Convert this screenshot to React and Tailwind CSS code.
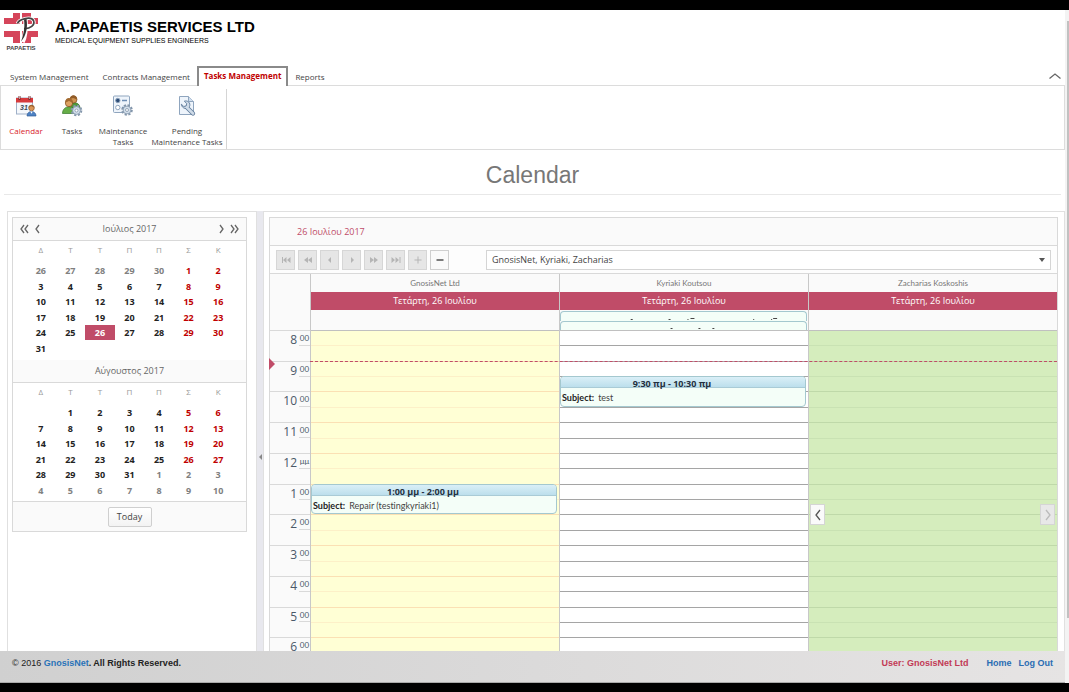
import clsx from 'clsx';

const tabs = ['System Management', 'Contracts Management', 'Tasks Management', 'Reports'];

const weekdays = ['Δ', 'Τ', 'Τ', 'Π', 'Π', 'Σ', 'Κ'];

const july = [
  [26, 27, 28, 29, 30, 1, 2],
  [3, 4, 5, 6, 7, 8, 9],
  [10, 11, 12, 13, 14, 15, 16],
  [17, 18, 19, 20, 21, 22, 23],
  [24, 25, 26, 27, 28, 29, 30],
  [31, null, null, null, null, null, null],
];

const august = [
  [null, 1, 2, 3, 4, 5, 6],
  [7, 8, 9, 10, 11, 12, 13],
  [14, 15, 16, 17, 18, 19, 20],
  [21, 22, 23, 24, 25, 26, 27],
  [28, 29, 30, 31, 1, 2, 3],
  [4, 5, 6, 7, 8, 9, 10],
];

const hours = [
  [8, '00'], [9, '00'], [10, '00'], [11, '00'], [12, 'μμ'], [1, '00'],
  [2, '00'], [3, '00'], [4, '00'], [5, '00'], [6, '00'],
];

const columns = [
  {
    name: 'GnosisNet Ltd',
    cell: 'bg-[#ffffd5]',
    hourLine: 'border-[#fbe0b4]',
    halfLine: 'border-[#fdf0c8]',
    event: { start: 13, end: 14, time: '1:00 μμ - 2:00 μμ', subject: 'Repair (testingkyriaki1)' },
  },
  {
    name: 'Kyriaki Koutsou',
    cell: 'bg-white',
    hourLine: 'border-[#a5a5a5]',
    halfLine: 'border-[#a5a5a5]',
    allDay: true,
    event: { start: 9.5, end: 10.5, time: '9:30 πμ - 10:30 πμ', subject: 'test' },
  },
  {
    name: 'Zacharias Koskoshis',
    cell: 'bg-[#d5edbd]',
    hourLine: 'border-[#bfd9a9]',
    halfLine: 'border-[#c9e2b3]',
  },
];

const position = (hour) => `${((hour - 8) / hours.length) * 100}%`;

function Logo() {
  return (
    <div className="w-9 shrink-0">
      <svg viewBox="0 0 36 31" className="block h-[31px] w-9">
        <path d="M10 0h7v11H1V5h9zM19 0h9v5h7v6H19zM1 18h16v12h-7v-6H1zM19 18h16v6h-7v6h-9z" fill="#d5455a" />
        <path d="M22.500 6C23 15 23 22 19.500 29" fill="none" stroke="#fff" strokeWidth="4.500" />
        <path d="M14.500 10.500C16 6 28 3 30.500 7.500C32.500 12 27 16 21 15.500" fill="none" stroke="#fff" strokeWidth="3.500" />
        <path d="M14.500 10.500C16 6 28 3 30.500 7.500C32.500 12 27 16 21 15.500" fill="none" stroke="#444" strokeWidth="1.700" />
        <path d="M21 6.500C22 14 21 20 18 28.500C23 23 25 15 23.500 6z" fill="#333" />
      </svg>
      <div className="text-center font-['Liberation_Sans'] text-[6px] leading-[8px] font-bold text-[#444]">PAPAETIS</div>
    </div>
  );
}

function GearShape({ x, y }) {
  return (
    <g transform={`translate(${x} ${y})`}>
      <circle r="4.600" fill="none" stroke="#8396ab" strokeWidth="2.400" strokeDasharray="2.100 1.510" />
      <circle r="3.900" fill="#d3dfeb" stroke="#8396ab" strokeWidth=".8" />
      <circle r="1.500" fill="#fff" stroke="#8396ab" strokeWidth=".8" />
    </g>
  );
}

function CalendarIcon() {
  return (
    <svg viewBox="0 0 22 22" className="h-[22px] w-[22px]">
      <rect x="1.500" y="3" width="16" height="16" fill="#f5f8fc" stroke="#9fb0c8" />
      <path d="M1 3h17v4.500H1z" fill="#d63a3c" />
      <path d="M4.500 1v4M14.500 1v4" stroke="#7a2a2c" strokeWidth="2" />
      <path d="M4.500 1v3M14.500 1v3" stroke="#e8d5d5" strokeWidth=".7" />
      <text x="5" y="15" fontSize="7" fontStyle="italic" fontWeight="bold" fill="#3c4654" fontFamily="Liberation Sans">31</text>
      <circle cx="16.500" cy="13" r="2.800" fill="#d99557" stroke="#8f562a" strokeWidth=".7" />
      <path d="M13.500 12.500c.5-3.500 5.500-3.500 6 0-2-.4-3-1.500-3.500-1.500s-1 1.200-2.500 1.500z" fill="#99602e" />
      <path d="M12 21c0-6 9-6 9 0z" fill="#4e82c4" stroke="#2f5c98" strokeWidth=".7" />
      <path d="M15.200 16.500l1.300 2.300 1.300-2.300z" fill="#fff" />
    </svg>
  );
}

function TasksIcon() {
  return (
    <svg viewBox="0 0 22 22" className="h-[22px] w-[22px]">
      <path d="M8 13c0-7 11-7 11 0z" fill="#4f9a3b" stroke="#2f6e23" strokeWidth=".7" />
      <circle cx="12.500" cy="4.500" r="3.500" fill="#cf9352" stroke="#7c4a1d" strokeWidth=".7" />
      <path d="M9 4c0-5 7-5 7 .5-2-.5-3-1.500-4-1.500s-1.500 1-3 1z" fill="#925c28" />
      <path d="M1.500 18.500c0-9 13-9 13 0z" fill="#66ad47" stroke="#35782a" strokeWidth=".7" />
      <circle cx="8" cy="8" r="3.700" fill="#dda263" stroke="#7c4a1d" strokeWidth=".7" />
      <path d="M4.200 7.500c0-6 7.600-6 7.600.5-2-.5-2.800-2-3.800-2s-2 1.500-3.800 1.500z" fill="#a36a30" />
      <GearShape x={15.500} y={15.500} />
    </svg>
  );
}

function MaintenanceIcon() {
  return (
    <svg viewBox="0 0 22 22" className="h-[22px] w-[22px]">
      <rect x="1.500" y="1" width="16" height="16.500" rx="1" fill="#eef4fb" stroke="#8fa5be" />
      <circle cx="5.800" cy="5.500" r="2.200" fill="#2d4d77" stroke="#8fa5be" />
      <circle cx="5.800" cy="12.500" r="2.200" fill="#fff" stroke="#8fa5be" />
      <path d="M10 5.500h5M10 12.500h3" stroke="#6c8db4" strokeWidth="1.500" />
      <GearShape x={15} y={15} />
    </svg>
  );
}

function PendingIcon() {
  return (
    <svg viewBox="0 0 22 22" className="h-[22px] w-[22px]">
      <path d="M3.500 1.500h9l5 5v13h-14z" fill="#eef4fb" stroke="#8fa5be" />
      <path d="M12.500 1.500v5h5" fill="#d0deed" stroke="#8fa5be" />
      <path d="M11 12.500l6 6" stroke="#5f7a99" strokeWidth="4.200" strokeLinecap="round" />
      <path d="M5.300 9.200l2.500 2.300 2.400-.6.500-2.400-2.400-2.300c3.500-1.300 6.700 2 5.200 5.300-1.600 3.200-7.600 2.700-8.200-2.300z" fill="#cfdbe8" stroke="#5f7a99" strokeWidth=".9" />
      <path d="M11 12.500l6 6" stroke="#cfdbe8" strokeWidth="2.600" strokeLinecap="round" />
    </svg>
  );
}

function Header() {
  return (
    <header className="font-['Open_Sans'] text-[8px]">
      <div className="flex h-14 gap-4 pt-[3px] pl-[3px]">
        <Logo />
        <div className="pt-[5px] font-['Liberation_Sans'] text-black">
          <div className="text-[15px] leading-[18px] font-bold">A.PAPAETIS SERVICES LTD</div>
          <div className="text-[7px] leading-[9px]">MEDICAL EQUIPMENT SUPPLIES ENGINEERS</div>
        </div>
      </div>

      <nav className="flex h-[19px] items-stretch pr-1 pl-[3px]">
        {tabs.map(tab => {
          const active = tab === 'Tasks Management';
          return (
            <a
              key={tab}
              href="#"
              className={clsx(
                'whitespace-nowrap',
                active ? 'z-10 -mb-px border-2 border-b-0 border-[#8a8a8a] bg-white px-[5px] leading-[16px] font-bold text-[#c00000]' : 'px-[7px] leading-[21px]'
              )}
            >
              {tab}
            </a>
          );
        })}
        <button aria-label="Collapse ribbon" className="ml-auto">
          <svg viewBox="0 0 12 6" className="h-[6px] w-3" fill="none" stroke="#666" strokeWidth="1.300"><path d="M.5 5.500L6 1l5.500 4.500" /></svg>
        </button>
      </nav>

      <div className="flex h-[65px] border border-[#dcdcdc] pl-[2px]">
        <div className="mt-[3px] flex border-r border-[#d5d5d5] pr-[3px] text-center leading-[11px]">
          <RibbonItem icon={<CalendarIcon />} className="w-[46px] text-[#d8232a]">Calendar</RibbonItem>
          <RibbonItem icon={<TasksIcon />} className="w-[46px]">Tasks</RibbonItem>
          <RibbonItem icon={<MaintenanceIcon />} className="w-14">Maintenance<br />Tasks</RibbonItem>
          <RibbonItem icon={<PendingIcon />} className="w-[72px]">Pending<br />Maintenance Tasks</RibbonItem>
        </div>
      </div>
    </header>
  );
}

function RibbonItem({ icon, className, children }) {
  return (
    <button className={clsx('flex flex-col items-center gap-2 pt-[6px] whitespace-nowrap', className)}>
      {icon}
      <span>{children}</span>
    </button>
  );
}

function Month({ weeks, current }) {
  return (
    <div className="px-[13px]">
      <table className="w-full table-fixed text-center">
        <thead>
          <tr className="h-[22px] font-['Open_Sans'] text-[8px] text-[#999]">
            {weekdays.map((d, i) => <th key={i} className="p-0 pb-1 font-normal">{d}</th>)}
          </tr>
        </thead>
        <tbody className="font-['Open_Sans'] leading-[15px] font-bold">
          {weeks.map((week, w) => (
            <tr key={w} className="h-[15px] even:h-[16px]">
              {week.map((day, i) => {
                const outside = (w === 0 && day > 7) || (w > 3 && day < 15);
                return (
                  <td
                    key={i}
                    className={clsx(
                      'p-0',
                      day === current && w === 4 ? 'bg-[#c04c68] text-white'
                        : outside ? 'text-[#808080]'
                        : i > 4 ? 'text-[#c00000]' : 'text-[#222]'
                    )}
                  >
                    {day}
                  </td>
                );
              })}
            </tr>
          ))}
        </tbody>
      </table>
    </div>
  );
}

function Chevrons({ d }) {
  return (
    <svg viewBox="0 0 10 10" className="h-[10px] w-[10px]" fill="none" stroke="#666" strokeWidth="1.300"><path d={d} /></svg>
  );
}

function DatePicker() {
  return (
    <div className="border border-[#d9d9d9]">
      <div className="flex h-[23px] items-center border-b border-[#d9d9d9] bg-[#fafafa] px-[6px] text-[#666]">
        <button aria-label="Previous year"><Chevrons d="M5 1L2 5l3 4M9 1L6 5l3 4" /></button>
        <button aria-label="Previous month" className="ml-1"><Chevrons d="M6 1L3 5l3 4" /></button>
        <span className="flex-1 text-center font-['Open_Sans']">Ιούλιος 2017</span>
        <button aria-label="Next month" className="mr-1"><Chevrons d="M4 1l3 4-3 4" /></button>
        <button aria-label="Next year"><Chevrons d="M1 1l3 4-3 4M5 1l3 4-3 4" /></button>
      </div>
      <Month weeks={july} current={26} />
      <div className="mt-[4px] h-[23px] border-b border-[#d9d9d9] bg-[#fafafa] text-center font-['Open_Sans'] leading-[22px] text-[#666]">Αύγουστος 2017</div>
      <Month weeks={august} />
      <div className="mt-[3px] flex h-[30px] items-center justify-center border-t border-[#d9d9d9] bg-[#fafafa]">
        <button className="h-5 w-11 rounded-xs border border-[#cfcfcf] bg-linear-to-b from-white to-[#f3f3f3] font-['Open_Sans']">Today</button>
      </div>
    </div>
  );
}

const toolbar = [
  ['First', 'M1 2h1v6H1zM5.500 2v6L2 5zM9.500 2v6L6 5z'],
  ['Page back', 'M5 2v6L1 5zM9 2v6L5 5z'],
  ['Back', 'M6 2v6L3 5z'],
  ['Forward', 'M4 2v6l3-3z'],
  ['Page forward', 'M1 2v6l4-3zM5 2v6l4-3z'],
  ['Last', 'M.5 2v6L4 5zM4.500 2v6L8 5zM8.500 2h1v6h-1z'],
  ['Add resource', 'M4.500 1.500h1v3h3v1h-3v3h-1v-3h-3v-1h3z'],
  ['Remove resource', 'M1.500 4.300h7v1.400h-7z'],
];

function Toolbar() {
  return (
    <div className="flex h-7 items-center gap-[3px] border-b border-[#d9d9d9] bg-[#fdfdfd] px-[6px]">
      {toolbar.map(([label, d]) => {
        const enabled = label === 'Remove resource';
        return (
          <button
            key={label}
            aria-label={label}
            disabled={!enabled}
            className={clsx(
              'flex h-5 w-[19px] shrink-0 items-center justify-center border',
              enabled ? 'border-[#cfcfcf] bg-[#fafafa] text-[#444]' : 'border-[#d6d6d6] bg-[#e6e6e6] text-[#b5b5b5]'
            )}
          >
            <svg viewBox="0 0 10 10" className="h-[10px] w-[10px]" fill="currentColor"><path d={d} /></svg>
          </button>
        );
      })}
      <div className="relative ml-[34px] flex-1">
        <select aria-label="Resources" className="block h-5 w-full appearance-none border border-[#d5d5d5] bg-white px-[5px] font-['Open_Sans']">
          <option>GnosisNet, Kyriaki, Zacharias</option>
        </select>
        <svg viewBox="0 0 6 4" className="pointer-events-none absolute top-2 right-[6px] h-1 w-[6px]" fill="#555"><path d="M0 0h6L3 4z" /></svg>
      </div>
    </div>
  );
}

function Appointment({ event }) {
  return (
    <article
      className="absolute right-[2px] left-0 -mt-px overflow-hidden rounded-[4px] border border-[#a4c8cf] bg-[#f4fef8]"
      style={{ top: position(event.start), height: position(8 + event.end - event.start) }}
    >
      <div className="h-[11px] border-b border-[#a9cbd6] bg-linear-to-b from-[#daeff7] to-[#bcdfec] pr-[22px] text-center font-['Open_Sans'] leading-[14px] font-bold text-[#243040]">
        {event.time}
      </div>
      <p className="pl-px leading-[20px] [font-variant-ligatures:none]">
        <b className="mr-1 text-[#222]">Subject:</b>{event.subject}
      </p>
    </article>
  );
}

function ResourceColumn({ column }) {
  return (
    <section className="flex min-w-0 flex-1 flex-col border-l border-[#c8c8c8]">
      <h3 className="h-[18px] text-center text-[8px] leading-[19px] text-[#777]">{column.name}</h3>
      <div className="h-[18px] bg-[#c04c68] text-center font-['Open_Sans'] leading-[18px] font-medium text-white">Τετάρτη, 26 Ιουλίου</div>
      <div className="h-[21px] border-b border-[#c0c0c0] pr-px">
        {column.allDay && (
          <>
            <div className="mt-px h-[10px] rounded-t-[4px] border border-b-0 border-[#a4c8cf] bg-[#f4fef8]">
              <svg viewBox="0 0 246 9" className="h-[9px] w-full" stroke="#444"><path d="M70 7.500h2M108 7.500h2M127 7.500h1M130 6.500h4M193 7.500h1M213 6.500h4M211 7.500h1" /></svg>
            </div>
            <div className="h-[9px] rounded-t-[4px] border border-b-0 border-[#a4c8cf] bg-[#f4fef8]">
              <svg viewBox="0 0 246 8" className="h-[8px] w-full" stroke="#444"><path d="M110 6.500h2M138 6.500h2M152 6.500h2" /></svg>
            </div>
          </>
        )}
      </div>
      <div className="relative h-[338px]">
        <div className="flex h-full flex-col">
          {hours.map(([hour]) => (
            <div key={hour} className={clsx('flex flex-1 flex-col border-b', column.cell, column.hourLine)}>
              <div className={clsx('flex-1 border-b', column.halfLine)} />
              <div className="flex-1" />
            </div>
          ))}
        </div>
        {column.event && <Appointment event={column.event} />}
      </div>
    </section>
  );
}

function Scheduler() {
  return (
    <div className="border border-[#d9d9d9] bg-[#fafafa]">
      <h2 className="h-7 border-b border-[#d9d9d9] pl-[27px] font-['Open_Sans'] leading-[27px] text-[#c04c68]">26 Ιουλίου 2017</h2>
      <Toolbar />
      <div className="relative flex">
        <div className="w-10 shrink-0 pt-14">
          <div className="flex h-[339px] flex-col border-t border-[#d9d9d9] text-[#4a5868]">
            {hours.map(([hour, minutes]) => (
              <div key={hour} className="flex flex-1 border-b border-[#d9d9d9]">
                <span className="w-[27px] text-right font-['Open_Sans'] text-[12px] leading-[18px]">{hour}</span>
                <span className="ml-[2px] h-1/2 flex-1 border-b border-[#d9d9d9] text-center text-[8px] leading-[15px]">{minutes}</span>
              </div>
            ))}
          </div>
        </div>
        {columns.map(column => <ResourceColumn key={column.name} column={column} />)}

        <div className="absolute top-[87px] right-0 left-10 border-t border-dashed border-[#c04c68]" />
        <svg viewBox="0 0 6 12" className="absolute top-[84px] -left-px h-3 w-[6px]" fill="#c04c68"><path d="M0 0l6 6-6 6z" /></svg>
        <div className="absolute top-[230px] right-[2px] left-[540px] flex justify-between">
          <button aria-label="Previous resource" className="flex h-[21px] w-[15px] items-center justify-center border border-[#d5d5d5] bg-[#fafafa]">
            <svg viewBox="0 0 6 12" className="h-3 w-[6px]" fill="none" stroke="#555" strokeWidth="1.300"><path d="M5 1L1 6l4 5" /></svg>
          </button>
          <button aria-label="Next resource" disabled className="flex h-[21px] w-[15px] items-center justify-center border border-[#d5d5d5] bg-[#e8e8e8]">
            <svg viewBox="0 0 6 12" className="h-3 w-[6px]" fill="none" stroke="#bbb" strokeWidth="1.300"><path d="M1 1l4 5-4 5" /></svg>
          </button>
        </div>
      </div>
    </div>
  );
}

export default function App() {
  return (
    <div className="flex h-screen flex-col overflow-hidden border-t-10 border-b-9 border-black bg-white font-['Lato','Open_Sans',sans-serif] text-[9px] text-[#444]">
      <div className="flex min-h-0 flex-1">
        <div className="flex min-w-0 flex-1 flex-col">
          <div className="flex min-h-0 flex-1 flex-col overflow-hidden">
            <Header />
            <h1 className="mx-1 h-[45px] shrink-0 border-b border-[#e8e8e8] text-center font-['Liberation_Sans'] text-[23px] leading-[51px] text-[#777]">Calendar</h1>
            <main className="mt-4 ml-[7px] flex min-h-0 flex-1">
              <aside className="w-[250px] shrink-0 border border-b-0 border-[#e0e0e0] py-[5px] pr-[9px] pl-1">
                <DatePicker />
              </aside>
              <div className="flex w-[6px] shrink-0 items-center justify-center bg-[#e8e8ee] pt-[52px]">
                <svg viewBox="0 0 3 6" className="h-[6px] w-[3px]" fill="#888"><path d="M3 0v6L0 3z" /></svg>
              </div>
              <div className="min-w-0 flex-1 border border-b-0 border-[#e0e0e0] py-[5px] pr-[6px] pl-[5px]">
                <Scheduler />
              </div>
            </main>
          </div>
          <footer className="flex h-8 shrink-0 items-center border-b border-[#aaa] bg-linear-to-r from-[#d0d0d0] to-[#e6e4e4] pr-3 pb-[6px] pl-3 font-['Liberation_Sans'] font-bold text-[#222]">
            <p><span className="font-normal">© 2016</span> <a href="#" className="text-[#2a73b8]">GnosisNet</a>. All Rights Reserved.</p>
            <span className="ml-auto text-[#c23a56]">User: GnosisNet Ltd</span>
            <a href="#" className="ml-[18px] text-[#2a6db3]">Home</a>
            <a href="#" className="ml-[7px] text-[#2a6db3]">Log Out</a>
          </footer>
        </div>
        <div className="flex w-1 shrink-0 justify-end bg-[#f3f3f3] pt-[11px]">
          <div className="h-[597px] w-[2px] bg-[#c1c1c1]" />
        </div>
      </div>
    </div>
  );
}
